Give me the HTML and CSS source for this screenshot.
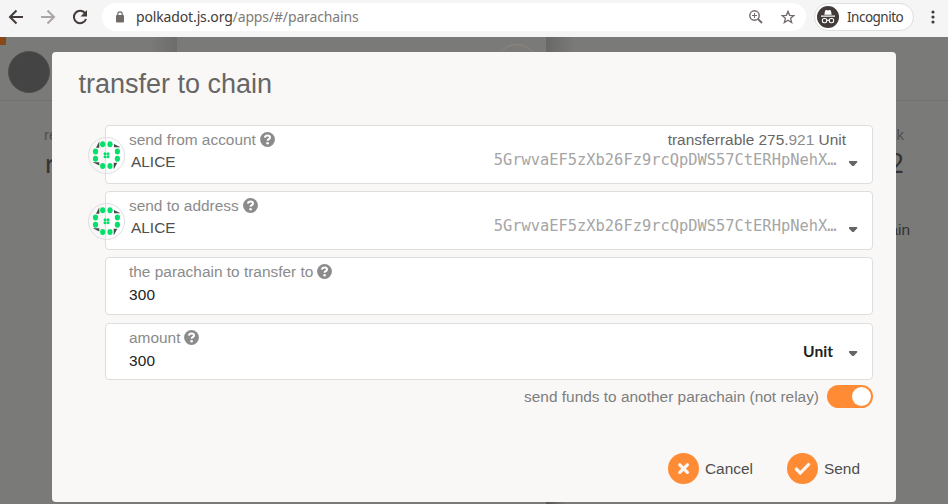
FILE: index.html
```html
<!DOCTYPE html>
<html lang="en">
<head>
<meta charset="utf-8">
<title>Parachains</title>
<link rel="stylesheet" href="styles.css">
</head>
<body>
<svg width="0" height="0" class="defs">
  <symbol id="help" viewBox="0 0 15 15"><circle cx="7.5" cy="7.5" r="7.4" fill="#8b8b8b"/><path d="M4.900 5.600C5.200 4.100 6.300 3.600 7.500 3.600c1.500 0 2.500.8 2.500 1.900 0 1.800-2.400 1.600-2.400 3.200" fill="none" stroke="#fff" stroke-width="2"/><circle cx="7.600" cy="11.200" r="1.300" fill="#fff"/></symbol>
  <symbol id="identicon" viewBox="88 137.500 37 37">
    <g fill="#4a4a4a"><path d="M96 148.300 99.300 141.700V148.300ZM114 144.500 120.500 147.700H114ZM113.700 170 117.300 163.300H113.700ZM92.700 162.700H99.300V166Z"/></g>
    <g fill="#00e06b"><ellipse cx="102.700" cy="144.700" rx="2.600" ry="3"/><ellipse cx="110" cy="144.700" rx="2.600" ry="3"/><ellipse cx="95.500" cy="152" rx="2.600" ry="3"/><ellipse cx="117.400" cy="152" rx="2.600" ry="3"/><ellipse cx="95.500" cy="159.300" rx="2.600" ry="3"/><ellipse cx="117.400" cy="159.300" rx="2.600" ry="3"/><ellipse cx="102.700" cy="166.500" rx="2.600" ry="3"/><ellipse cx="110" cy="166.500" rx="2.600" ry="3"/>
    <circle cx="105" cy="154.200" r="1.500"/><circle cx="108" cy="154.200" r="1.500"/><circle cx="105" cy="157.200" r="1.500"/><circle cx="108" cy="157.200" r="1.500"/></g>
    <circle cx="106.500" cy="156" r="18" fill="none" stroke="#dededf"/>
  </symbol>
</svg>
<header class="toolbar">
  <svg class="nav" viewBox="0 0 102 37" fill="none" stroke-width="2">
    <path d="M23 17H10M16.500 10.500 10 17l6.500 6.500" stroke="#423b39"/>
    <path d="M41 17H54M47.500 10.500 54 17l-6.500 6.500" stroke="#aaa6a4"/>
    <path d="M85.200 13.400A6.200 6.200 0 1 0 86 19" stroke="#423b39"/><path d="M87 10v6.500h-6.500Z" fill="#423b39"/>
  </svg>
  <div class="address">
    <svg class="lock" viewBox="0 0 8 12"><path d="M1.800 5V3a2.200 2.200 0 0 1 4.400 0V5" fill="none" stroke="#706a68" stroke-width="1.200"/><rect y="4" width="8" height="7.500" rx="1" fill="#706a68"/></svg>
    <span class="url">polkadot.js.org<span class="path">/apps/#/parachains</span></span>
    <svg class="zoom-icon" viewBox="0 0 14 14" fill="none" stroke="#706a68"><circle cx="5.500" cy="5.500" r="4.700" stroke-width="1.400"/><path d="m9 9 4 4" stroke-width="1.800"/><path d="M5.500 3v5M3 5.500h5"/></svg>
    <svg class="star" viewBox="0 0 14 14"><path d="m7 1.300 1.600 4 4.300.3-3.300 2.700 1.100 4.200L7 10.200l-3.700 2.300 1.100-4.200L1.100 5.600l4.300-.3Z" fill="none" stroke="#706a68" stroke-width="1.300"/></svg>
  </div>
  <div class="incognito">
    <svg viewBox="0 0 22 22"><circle cx="11" cy="11" r="11" fill="#423b39"/><path d="m7.300 8.800.8-4.400L9.600 4l1.400.4 1.400-.4 1.500.4.800 4.400ZM4 9.500h14v1.200H4Z" fill="#fff"/><g fill="none" stroke="#fff" stroke-width="1.100"><rect x="5.400" y="12.500" width="4.300" height="4.300" rx="1.700"/><rect x="12.300" y="12.500" width="4.300" height="4.300" rx="1.700"/><path d="M9.700 14.500q1.300-.8 2.600 0"/></g></svg>
    <span>Incognito</span>
  </div>
  <svg class="dots" viewBox="0 0 4 14" fill="#423b39"><circle cx="2" cy="2" r="1.600"/><circle cx="2" cy="7" r="1.600"/><circle cx="2" cy="12" r="1.600"/></svg>
</header>
<main class="page">
  <div class="page-head">
    <span class="accent"></span><span class="avatar"></span>
    <span class="shade left"></span><span class="shade right"></span><span class="ring"></span>
  </div>
  <div class="summary">
    <div><small>relay</small><b>r</b></div>
    <div class="end"><small>k</small><b>2</b><span>ain</span></div>
  </div>
  <span class="foot-shade"></span>
</main>
<section class="modal">
  <h1>transfer to chain</h1>
  <div class="fields">
    <div class="field account">
      <svg class="ident"><use href="#identicon"/></svg>
      <div class="row"><label>send from account</label><svg class="help"><use href="#help"/></svg><span class="balance">transferrable 275.<i>921</i> Unit</span></div>
      <div class="row value"><span>ALICE</span><code>5GrwvaEF5zXb26Fz9rcQpDWS57CtERHpNehX…</code><span class="caret"></span></div>
    </div>
    <div class="field account">
      <svg class="ident"><use href="#identicon"/></svg>
      <div class="row"><label>send to address</label><svg class="help"><use href="#help"/></svg></div>
      <div class="row value"><span>ALICE</span><code>5GrwvaEF5zXb26Fz9rcQpDWS57CtERHpNehX…</code><span class="caret"></span></div>
    </div>
    <div class="field plain parachain">
      <div class="row"><label>the parachain to transfer to</label><svg class="help"><use href="#help"/></svg></div>
      <div class="row value"><span>300</span></div>
    </div>
    <div class="field plain split">
      <div>
        <div class="row"><label>amount</label><svg class="help"><use href="#help"/></svg></div>
        <div class="row value"><span>300</span></div>
      </div>
      <div class="unit"><span>Unit</span><span class="caret"></span></div>
    </div>
  </div>
  <div class="toggle-row"><span>send funds to another parachain (not relay)</span><span class="toggle"></span></div>
  <footer>
    <div class="button"><svg viewBox="0 0 31 31"><circle cx="15.500" cy="15.500" r="15.500" fill="#ff8c35"/><path d="m11.800 11.800 7.600 7.600m0-7.600-7.600 7.600" stroke="#f9f8f6" stroke-width="3.200" stroke-linecap="round"/></svg><span>Cancel</span></div>
    <div class="button"><svg viewBox="0 0 31 31"><circle cx="15.500" cy="15.500" r="15.500" fill="#ff8c35"/><path d="m9.300 16 4 4 8.300-8.500" fill="none" stroke="#f9f8f6" stroke-width="3.200" stroke-linecap="round"/></svg><span>Send</span></div>
  </footer>
</section>
</body>
</html>
```
FILE: styles.css
```css
* { box-sizing: border-box; }
body { margin: 0; width: 948px; height: 504px; overflow: hidden; font: 15.43px/18px "Liberation Sans", sans-serif; background: #7a7a78; position: relative; }
svg { display: block; flex: none; }
.defs { position: absolute; }
.toolbar { height: 37px; background: #f5f5f5; display: flex; font-family: "Noto Sans", sans-serif; }
.nav { width: 102px; height: 37px; }
.address { width: 704px; height: 28px; margin-top: 3px; border-radius: 14px; background: #fff; display: flex; align-items: center; padding: 0 11px 0 14px; }
.lock { width: 8px; height: 12px; }
.url { margin-left: 12px; font-size: 14px; letter-spacing: -0.14px; color: #423b39; white-space: nowrap; }
.path { color: #807a78; }
.zoom-icon { width: 14px; height: 14px; margin-left: auto; }
.star { width: 14px; height: 14px; margin-left: 18px; }
.incognito { width: 100px; height: 28px; margin: 3px 0 0 8px; border: 1px solid #dedede; border-radius: 14px; background: #fff; display: flex; align-items: center; padding-left: 2px; font-size: 13.5px; letter-spacing: -0.5px; color: #423b39; }
.incognito svg { width: 22px; height: 22px; margin-right: 8px; }
.dots { width: 4px; height: 14px; margin: 10px 0 0 16.500px; }
.page { height: 467px; position: relative; }
.page-head { height: 64px; border-bottom: 1px solid #70706e; position: relative; }
.accent { position: absolute; left: 0; top: 0; width: 6px; height: 8px; background: #88481a; }
.avatar { position: absolute; left: 8px; top: 14px; width: 42px; height: 42px; border-radius: 50%; background: #444; border: 1px solid #4f4f4e; }
.shade { position: absolute; top: 0; height: 15px; width: 28px; }
.left { left: 149px; background: linear-gradient(to right, #7a7a78, #6d6d6c); }
.right { left: 546px; background: linear-gradient(to right, #686867, #7a7a78); }
.ring { position: absolute; left: 496px; top: 7px; width: 41px; height: 41px; border: 1px solid #94857a; border-radius: 50%; }
.foot-shade { position: absolute; left: 546px; bottom: 0; width: 20px; height: 2px; background: linear-gradient(to right, #555, #7a7a78); }
.summary { display: flex; justify-content: space-between; padding: 25px 38px 0 44px; color: #333; }
.summary div { display: flex; flex-direction: column; }
.summary small { font-size: 15px; color: #4e4e4d; }
.summary b { font: 27px/32px Lato, sans-serif; margin: 3px 0 0 1px; }
.summary .end { align-items: flex-end; }
.summary .end small { margin-right: 6px; }
.summary .end b { margin-right: 6px; }
.end span { margin-top: 42px; }
.modal { position: absolute; left: 52px; top: 52px; width: 844px; height: 450px; border-radius: 4px; background: #f9f8f6; color: #4e4e4e; }
h1 { margin: 0; padding: 16px 26.500px 0; height: 73px; font-size: 27px; line-height: 32px; font-weight: 400; color: #666; }
.fields { margin: 0 23px 0 53px; display: grid; grid-template-rows: 59px 59px 58px 57px; row-gap: 7px; }
.fields .split { margin-top: 1px; height: 57px; }
.field { position: relative; height: 100%; background: #fff; border: 1px solid #dededf; border-radius: 4px; padding: 5px 12px 0 23px; }
.ident { position: absolute; left: -18px; top: 11px; width: 37px; height: 37px; }
.row { display: flex; align-items: center; height: 18px; white-space: nowrap; }
label { color: #8b8b8b; }
.help { width: 15px; height: 15px; margin: -1px 0 0 4px; }
.balance { margin-left: auto; margin-right: 14px; color: #666; }
.balance i { font-style: normal; color: #8b8b8b; }
.value { height: 26px; color: #4e4e4e; }
.account .value span:first-child { margin-left: 2px; }
code { font: 15.4px/18px "DejaVu Sans Mono", monospace; color: #a5a5a5; margin: -4px 12px 0 auto; }
.caret { width: 9px; height: 5px; background: #666; clip-path: polygon(0 20%, 8% 0, 92% 0, 100% 20%, 58% 100%, 42% 100%); margin-right: 2.500px; margin-top: 3px; }
.plain .value { color: #222; height: 28px; }
.plain .value span { letter-spacing: 0.2px; }
.split { display: flex; justify-content: space-between; }
.unit { display: flex; align-items: center; height: 46px; font: 700 15.6px/18px Lato, sans-serif; color: #222; gap: 15.500px; }
.unit span:first-child { margin-top: -2px; }
.toggle-row { display: flex; justify-content: flex-end; align-items: center; gap: 8px; height: 23px; margin: 6px 23px 0; color: #7e7e7e; }
.toggle { width: 46px; height: 23px; border-radius: 12px; background: #ff8c35; display: flex; justify-content: flex-end; padding: 2px; }
.toggle::after { content: ""; width: 19px; height: 19px; border-radius: 50%; background: #fff; }
footer { display: flex; justify-content: flex-end; gap: 34px; margin: 45px 36px 0; }
.button { display: flex; align-items: center; gap: 6px; }
.button svg { width: 31px; height: 31px; }
```
